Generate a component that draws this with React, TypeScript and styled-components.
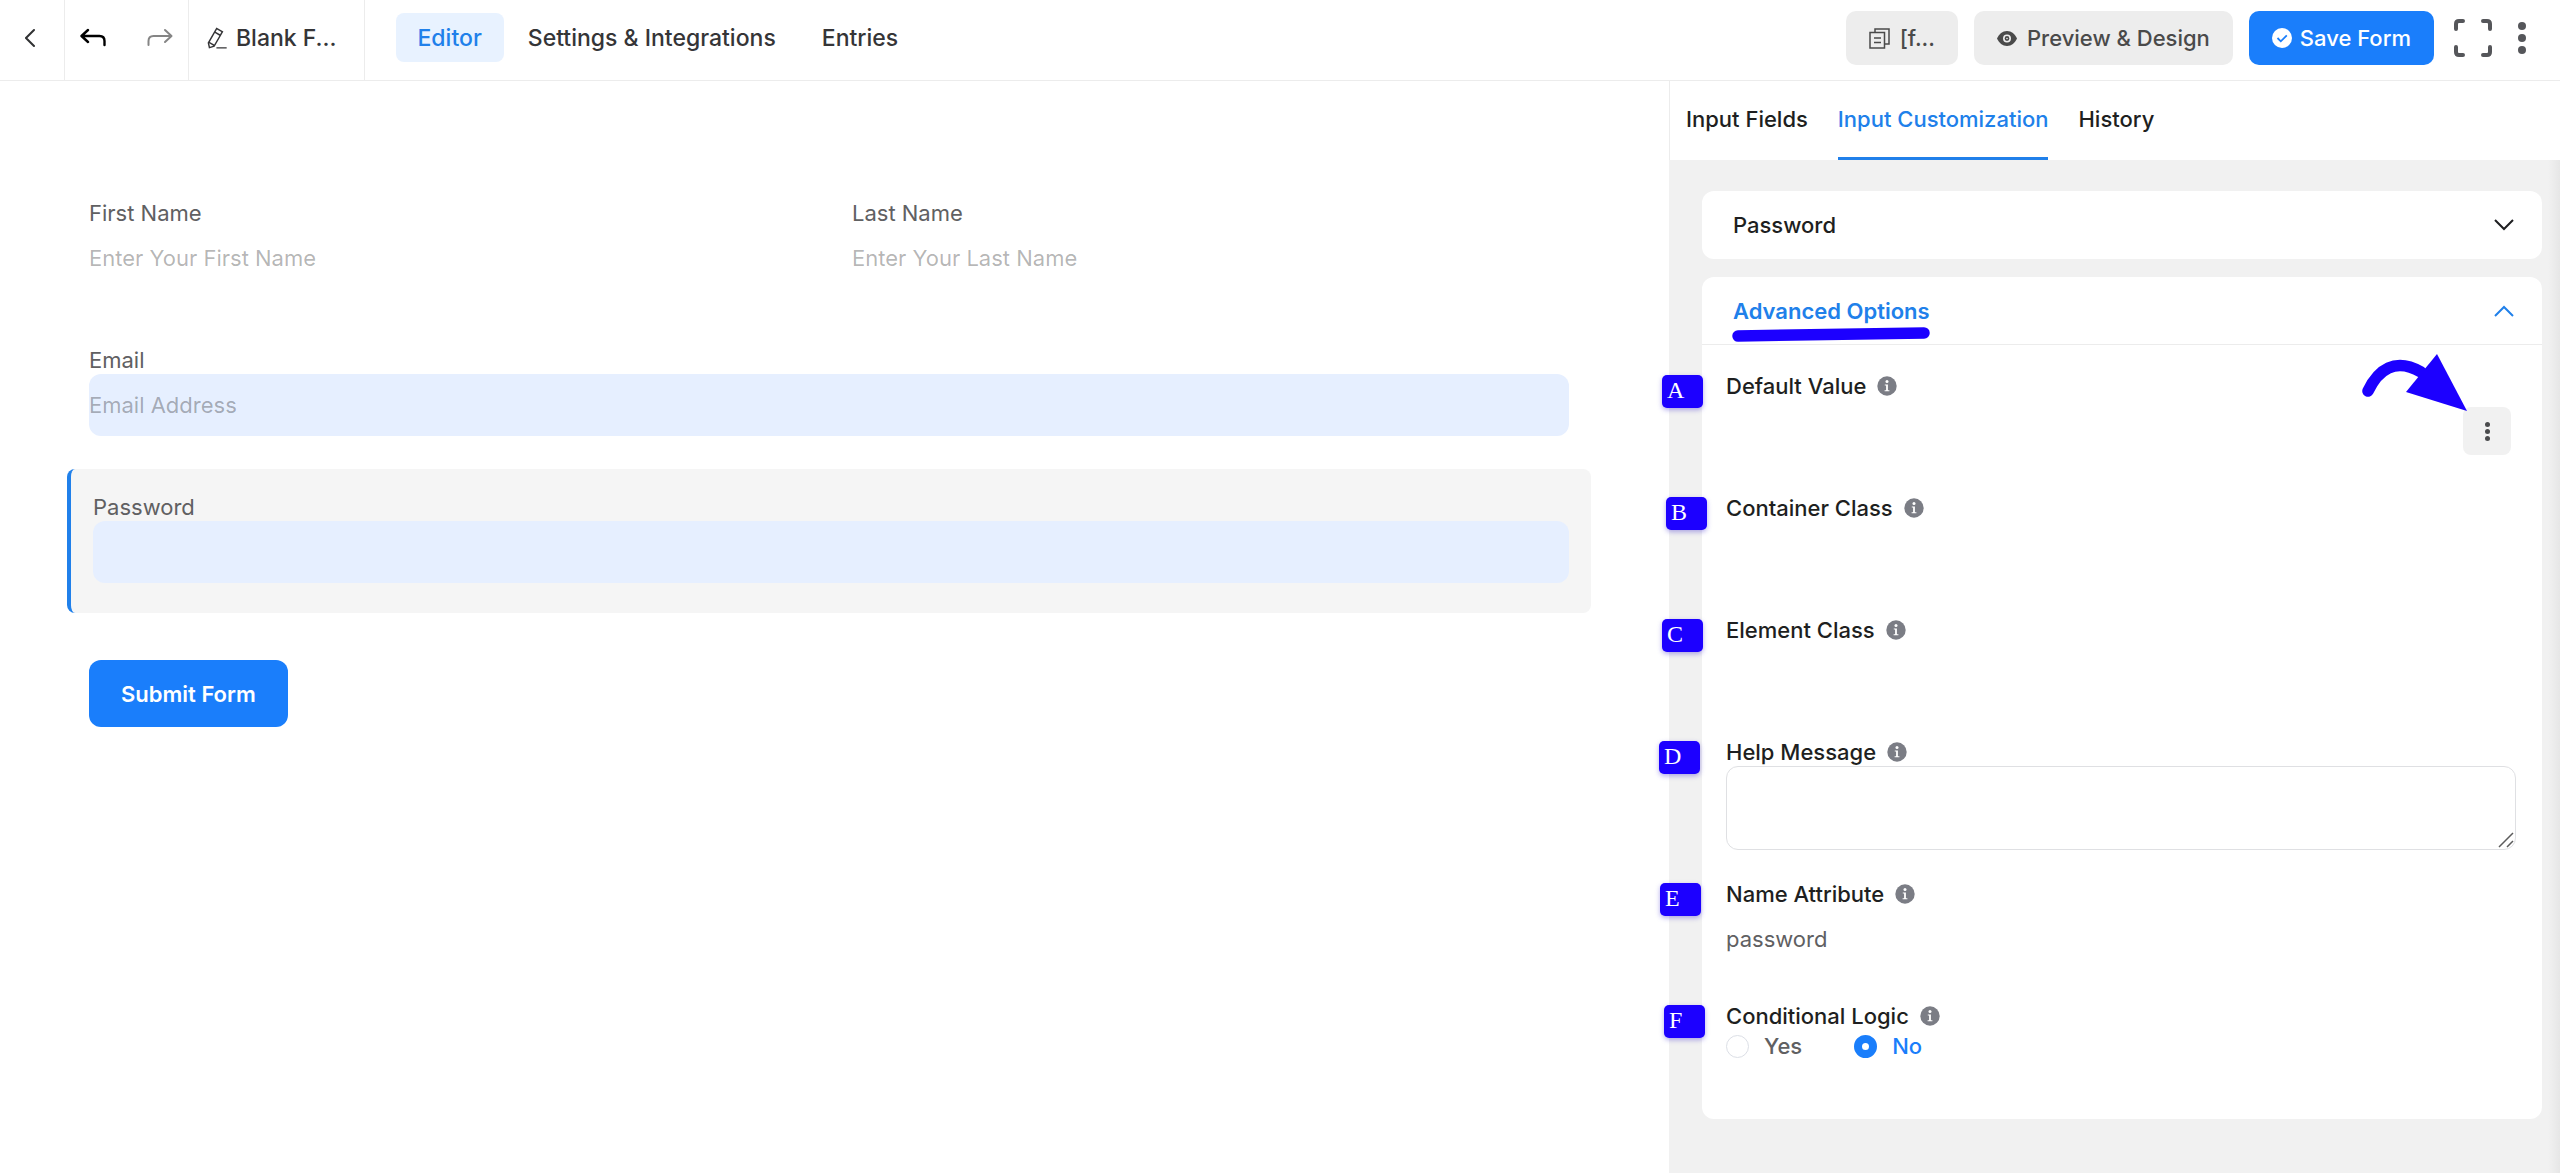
import React, { useId, useState } from "react";
import styled, { createGlobalStyle } from "styled-components";

const BLUE = "#1a7efb";
const LINK = "#2080ea";
const INK = "#1c00ff";

const GlobalStyle = createGlobalStyle`
  *, *::before, *::after { box-sizing: border-box; }
  body {
    margin: 0;
    background: #fff;
    color: #1e1f21;
    font-family: Inter, "Liberation Sans", sans-serif;
    font-size: 22px;
    line-height: 28px;
  }
  button, input, textarea { font: inherit; color: inherit; }
  button { cursor: pointer; }
`;

const Page = styled.div`
  display: flex;
  flex-direction: column;
  min-height: 100vh;
`;

/* ---------- top bar ---------- */

const TopBar = styled.header`
  display: flex;
  align-items: stretch;
  height: 81px;
  border-bottom: 1px solid #ececec;
`;

const BarCell = styled.div<{ $pad: number; $end?: number; $gap?: number }>`
  display: flex;
  align-items: center;
  gap: ${(p) => p.$gap ?? 0}px;
  padding: 0 ${(p) => p.$end ?? p.$pad}px 4px ${(p) => p.$pad}px;
  border-right: 1px solid #ececec;
`;

const IconButton = styled.button<{ $color?: string }>`
  display: flex;
  padding: 0;
  border: 0;
  background: none;
  color: ${(p) => p.$color ?? "#303133"};
`;

const FormTitle = styled.button`
  display: flex;
  align-items: center;
  gap: 8px;
  padding: 0;
  border: 0;
  background: none;
  color: #353537;
  font-size: 23px;
  font-weight: 500;
`;

const MainNav = styled.nav`
  display: flex;
  align-items: center;
  gap: 2px;
  padding: 0 31px 6px;
`;

const NavLink = styled.a<{ $active?: boolean }>`
  padding: 11px 22px 10px;
  border-radius: 8px;
  background: ${(p) => (p.$active ? "#e8f2ff" : "transparent")};
  color: ${(p) => (p.$active ? LINK : "#353537")};
  font-size: 23px;
  font-weight: 500;
  text-decoration: none;
`;

const Actions = styled.div`
  display: flex;
  align-items: center;
  gap: 16px;
  margin-left: auto;
  padding: 0 34px 4px 0;
`;

const Tools = styled.div`
  display: flex;
  align-items: center;
  gap: 26px;
  padding-left: 4px;
`;

const ActionButton = styled.button<{ $primary?: boolean }>`
  display: flex;
  align-items: center;
  justify-content: center;
  gap: ${(p) => (p.$primary ? 8 : 10)}px;
  height: 54px;
  padding: 0 23px;
  border: 0;
  border-radius: 10px;
  background: ${(p) => (p.$primary ? BLUE : "#ededed")};
  color: ${(p) => (p.$primary ? "#fff" : "#4a4a4a")};
  font-weight: 500;
`;

/* ---------- form canvas ---------- */

const Workspace = styled.div`
  display: grid;
  flex: 1;
  grid-template-columns: 1669fr 891fr;
`;

const Canvas = styled.main`
  display: flex;
  flex-direction: column;
  gap: 3px;
  padding: 94px 78px 40px 67px;
`;

const Block = styled.section<{ $selected?: boolean }>`
  display: flex;
  gap: 46px;
  padding: 24px 22px 30px;
  border-radius: 8px;
  ${(p) => p.$selected && `background: #f5f5f5; border-left: 4px solid ${LINK};`}
`;

const FormField = styled.div`
  display: flex;
  flex: 1;
  flex-direction: column;
  color: #606062;
`;

const FormInput = styled.input<{ $filled?: boolean }>`
  width: 100%;
  height: 62px;
  padding: 0;
  border: 0;
  border-radius: 12px;
  background: ${(p) => (p.$filled ? "#e6efff" : "transparent")};
  outline: none;
  &::placeholder { color: rgba(0, 0, 0, 0.3); opacity: 1; }
`;

const SubmitRow = styled.div`
  padding: 44px 22px;
`;

const SubmitButton = styled.button`
  height: 67px;
  padding: 0 32px;
  border: 0;
  border-radius: 12px;
  background: ${BLUE};
  color: #fff;
  font-weight: 600;
`;

/* ---------- sidebar ---------- */

const Sidebar = styled.aside`
  background: linear-gradient(to left, #e6e6e6, #f1f1f1 12px);
`;

const Tabs = styled.div`
  display: flex;
  gap: 30px;
  height: 79px;
  padding: 0 16px;
  border-left: 1px solid #ececec;
  background: #fff;
`;

const Tab = styled.button<{ $active?: boolean }>`
  padding: 0;
  border: 0;
  border-bottom: 3px solid ${(p) => (p.$active ? LINK : "transparent")};
  background: none;
  color: ${(p) => (p.$active ? LINK : "#1e1f21")};
  font-weight: 500;
`;

const Cards = styled.div`
  display: flex;
  flex-direction: column;
  gap: 18px;
  padding: 31px 18px 55px 33px;
`;

const Card = styled.section`
  border-radius: 12px;
  background: #fff;
`;

const CardHeader = styled.button<{ $open?: boolean }>`
  position: relative;
  display: flex;
  align-items: center;
  justify-content: space-between;
  width: 100%;
  height: 68px;
  padding: 0 28px 0 31px;
  border: 0;
  border-bottom: 1px solid ${(p) => (p.$open ? "#ececec" : "transparent")};
  background: none;
  color: ${(p) => (p.$open ? LINK : "#1e1f21")};
  font-weight: ${(p) => (p.$open ? 600 : 500)};
`;

const Underline = styled.svg`
  position: absolute;
  left: 30px;
  top: 50px;
`;

const CardBody = styled.div`
  display: flex;
  flex-direction: column;
  gap: 32px;
  padding: 27px 26px 57px 24px;
`;

const Setting = styled.div`
  position: relative;
`;

const SettingLabel = styled.div`
  display: flex;
  align-items: center;
  gap: 11px;
  height: 28px;
  color: #1e1f21;
  font-weight: 500;
`;

const SettingInput = styled.input`
  flex: 1;
  width: 100%;
  height: 62px;
  padding: 0;
  border: 0;
  background: transparent;
  color: #606062;
  outline: none;
`;

const InputRow = styled.div`
  display: flex;
  align-items: center;
  padding-right: 5px;
`;

const MoreButton = styled.button`
  display: flex;
  align-items: center;
  justify-content: center;
  width: 48px;
  height: 48px;
  padding: 0;
  border: 0;
  border-radius: 8px;
  background: #f1f1f1;
  color: #4a4b4d;
`;

const HelpBox = styled.div`
  position: relative;
  height: 82px;
`;

const HelpText = styled.textarea`
  display: block;
  width: 100%;
  height: 84px;
  padding: 8px 16px;
  border: 1px solid #dfe0e3;
  border-radius: 12px;
  background: #fff;
  outline: none;
  resize: none;
`;

const Grip = styled.svg`
  position: absolute;
  right: 2px;
  bottom: 0;
  pointer-events: none;
`;

const RadioRow = styled.div`
  display: flex;
  gap: 52px;
  height: 32px;
`;

const RadioLabel = styled.label<{ $on: boolean }>`
  display: flex;
  align-items: center;
  gap: 15px;
  color: ${(p) => (p.$on ? BLUE : "#606062")};
  font-weight: 500;
`;

const Radio = styled.input`
  width: 23px;
  height: 23px;
  margin: 0;
  border: 1px solid #dcdfe6;
  border-radius: 50%;
  background: #fff;
  appearance: none;
  &:checked { border: 8px solid ${BLUE}; }
`;

const Marker = styled.span<{ $out: number }>`
  position: absolute;
  top: 3px;
  left: ${(p) => -p.$out}px;
  width: 41px;
  height: 33px;
  padding: 1px 5px;
  border-radius: 5px;
  background: ${INK};
  box-shadow: 0 2px 5px rgba(40, 20, 200, 0.35);
  color: #fff;
  font-family: "Liberation Serif", serif;
  font-size: 24px;
`;

const Arrow = styled.svg`
  position: absolute;
  top: -18px;
  right: 49px;
`;

/* ---------- icons ---------- */

const Dots = ({ r, gap }: { r: number; gap: number }) => (
  <svg width={r * 2} height={gap * 2 + r * 2} fill="currentColor" aria-hidden="true">
    {[0, 1, 2].map((i) => (
      <circle key={i} cx={r} cy={r + gap * i} r={r} />
    ))}
  </svg>
);

const Chevron = ({ up }: { up?: boolean }) => (
  <svg width="20" height="12" viewBox="0 0 20 12" fill="none" stroke="currentColor" strokeWidth="2" aria-hidden="true">
    <path d={up ? "M1 11l9-9 9 9" : "M1 1l9 9 9-9"} />
  </svg>
);

const InfoIcon = () => (
  <svg width="20" height="20" viewBox="0 0 20 20" aria-hidden="true">
    <circle cx="10" cy="10" r="9.7" fill="#7b7d85" />
    <circle cx="10" cy="5.4" r="1.5" fill="#fff" />
    <path d="M7.8 8.4h3.100v5.900h1.500v1H7.600v-1h1.500V9.400H7.800z" fill="#fff" />
  </svg>
);

const UndoIcon = ({ redo }: { redo?: boolean }) => (
  <svg
    width="26"
    height="20"
    viewBox="0 0 26 20"
    fill="none"
    stroke="currentColor"
    strokeWidth={redo ? 2 : 2.4}
    strokeLinecap="round"
    strokeLinejoin="round"
    aria-hidden="true"
  >
    {redo ? (
      <path d="M18 2l6.500 6L18 14M24 8H6.500Q1.500 8 1.500 13v4" />
    ) : (
      <path d="M8 2L1.500 8 8 14M2 8h17.500q5 0 5 5v4" />
    )}
  </svg>
);

/* ---------- parts ---------- */

function FieldBox(props: { label: string; type?: string; placeholder?: string; filled?: boolean }) {
  const id = useId();
  return (
    <FormField>
      <label htmlFor={id}>{props.label}</label>
      <FormInput id={id} type={props.type ?? "text"} placeholder={props.placeholder} $filled={props.filled} />
    </FormField>
  );
}

function SettingRow(props: {
  id: string;
  label: string;
  marker: string;
  out: number;
  children: React.ReactNode;
}) {
  return (
    <Setting>
      <Marker $out={props.out}>{props.marker}</Marker>
      <SettingLabel>
        <label htmlFor={props.id}>{props.label}</label>
        <InfoIcon />
      </SettingLabel>
      {props.children}
    </Setting>
  );
}

export default function App() {
  const [logic, setLogic] = useState("No");
  return (
    <Page>
      <GlobalStyle />
      <TopBar>
        <BarCell $pad={25}>
          <IconButton aria-label="Back">
            <svg width="14" height="20" viewBox="0 0 14 20" fill="none" stroke="currentColor" strokeWidth="2" strokeLinecap="round" aria-hidden="true">
              <path d="M9 2L1 10l8 8" />
            </svg>
          </IconButton>
        </BarCell>
        <BarCell $pad={15} $gap={41}>
          <IconButton aria-label="Undo" $color="#000"><UndoIcon /></IconButton>
          <IconButton aria-label="Redo" $color="#858585"><UndoIcon redo /></IconButton>
        </BarCell>
        <BarCell $pad={17} $end={27}>
          <FormTitle>
            <svg width="22" height="22" viewBox="64 20 900 960" fill="currentColor" aria-hidden="true">
              <path d="m199.040 672.640 193.984 112 224-387.968-193.920-112-224 388.032zm-23.872 60.160 32.896 148.288 144.896-45.696zM455.040 229.248l193.920 112 56.704-98.112-193.984-112-56.640 98.112zM104.320 708.800l384-665.024 304.768 175.936L409.152 884.800h.064l-248.448 78.336zm384 254.272v-64h448v64h-448z" />
            </svg>
            Blank F...
          </FormTitle>
        </BarCell>
        <MainNav>
          <NavLink href="#editor" $active>Editor</NavLink>
          <NavLink href="#settings">Settings &amp; Integrations</NavLink>
          <NavLink href="#entries">Entries</NavLink>
        </MainNav>
        <Actions>
          <ActionButton>
            <svg width="21" height="21" viewBox="0 0 21 21" fill="none" stroke="currentColor" strokeWidth="1.500" aria-hidden="true">
              <path d="M1 4.500h14.500V20H1zM6 4V1h14v15h-4M5 10h7M5 14.500h7" />
            </svg>
            [f...
          </ActionButton>
          <ActionButton>
            <svg width="20" height="15" viewBox="0 0 20 15" aria-hidden="true">
              <path d="M10 0C5.500 0 2 3 0 7.500 2 12 5.500 15 10 15s8-3 10-7.500C18 3 14.500 0 10 0z" fill="currentColor" />
              <circle cx="10" cy="7.500" r="3.200" fill="none" stroke="#ededed" strokeWidth="1.600" />
              <circle cx="10" cy="7.500" r="0.800" fill="#ededed" />
            </svg>
            Preview &amp; Design
          </ActionButton>
          <ActionButton $primary>
            <svg width="20" height="20" viewBox="0 0 20 20" aria-hidden="true">
              <circle cx="10" cy="10" r="10" fill="#fff" />
              <path d="M5.500 10l3.300 3.300 6-6" fill="none" stroke={BLUE} strokeWidth="1.800" />
            </svg>
            Save Form
          </ActionButton>
          <Tools>
            <IconButton aria-label="Full screen" $color="#55565a">
              <svg width="38" height="38" viewBox="0 0 38 38" fill="none" stroke="currentColor" strokeWidth="4" strokeLinecap="round" aria-hidden="true">
                <path d="M2 10V5q0-3 3-3h4M29 2h4q3 0 3 3v5M2 28v5q0 3 3 3h4M29 36h4q3 0 3-3v-5" />
              </svg>
            </IconButton>
            <IconButton aria-label="More" $color="#55565a"><Dots r={4} gap={12} /></IconButton>
          </Tools>
        </Actions>
      </TopBar>

      <Workspace>
        <Canvas>
          <Block>
            <FieldBox label="First Name" placeholder="Enter Your First Name" />
            <FieldBox label="Last Name" placeholder="Enter Your Last Name" />
          </Block>
          <Block>
            <FieldBox label="Email" type="email" placeholder="Email Address" filled />
          </Block>
          <Block $selected>
            <FieldBox label="Password" type="password" filled />
          </Block>
          <SubmitRow>
            <SubmitButton>Submit Form</SubmitButton>
          </SubmitRow>
        </Canvas>

        <Sidebar>
          <Tabs>
            <Tab>Input Fields</Tab>
            <Tab $active>Input Customization</Tab>
            <Tab>History</Tab>
          </Tabs>
          <Cards>
            <Card>
              <CardHeader>Password<Chevron /></CardHeader>
            </Card>
            <Card>
              <CardHeader $open>
                Advanced Options
                <Chevron up />
                <Underline width="198" height="15" viewBox="0 0 198 15" aria-hidden="true">
                  <path d="M6 9L192 6" stroke={INK} strokeWidth="11.500" strokeLinecap="round" />
                </Underline>
              </CardHeader>
              <CardBody>
                <SettingRow id="default" label="Default Value" marker="A" out={64}>
                  <InputRow>
                    <SettingInput id="default" />
                    <MoreButton aria-label="Insert shortcode"><Dots r={2.5} gap={7} /></MoreButton>
                  </InputRow>
                  <Arrow width="106" height="60" viewBox="0 0 106 60" aria-hidden="true">
                    <path d="M7 37C17 16 34 3 60 18" fill="none" stroke={INK} strokeWidth="11.500" strokeLinecap="round" />
                    <path d="M76 0L45 38 106 57z" fill={INK} />
                  </Arrow>
                </SettingRow>
                <SettingRow id="container" label="Container Class" marker="B" out={60}>
                  <InputRow><SettingInput id="container" /></InputRow>
                </SettingRow>
                <SettingRow id="element" label="Element Class" marker="C" out={64}>
                  <InputRow><SettingInput id="element" /></InputRow>
                </SettingRow>
                <SettingRow id="help" label="Help Message" marker="D" out={67}>
                  <HelpBox>
                    <HelpText id="help" />
                    <Grip width="16" height="16" viewBox="0 0 16 16" stroke="#5c5c5c" strokeWidth="1.500" aria-hidden="true">
                      <path d="M1 15L15 1M9 15l6-6" />
                    </Grip>
                  </HelpBox>
                </SettingRow>
                <SettingRow id="name" label="Name Attribute" marker="E" out={66}>
                  <InputRow><SettingInput id="name" defaultValue="password" /></InputRow>
                </SettingRow>
                <SettingRow id="logic-Yes" label="Conditional Logic" marker="F" out={62}>
                  <RadioRow>
                    {["Yes", "No"].map((v) => (
                      <RadioLabel key={v} $on={logic === v}>
                        <Radio id={`logic-${v}`} type="radio" name="logic" checked={logic === v} onChange={() => setLogic(v)} />
                        {v}
                      </RadioLabel>
                    ))}
                  </RadioRow>
                </SettingRow>
              </CardBody>
            </Card>
          </Cards>
        </Sidebar>
      </Workspace>
    </Page>
  );
}
